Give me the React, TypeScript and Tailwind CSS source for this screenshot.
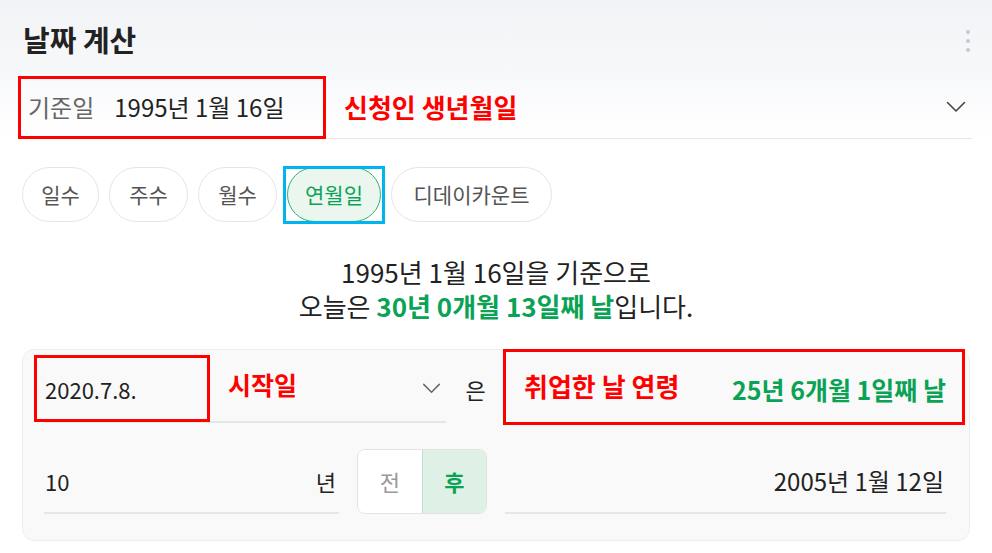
import React from "react";

const font = { fontFamily: '"Noto Sans CJK KR", "Noto Sans", sans-serif' };

function Chevron({ className }: { className?: string }) {
  return (
    <svg className={className} viewBox="0 0 20 12" fill="none" stroke="currentColor" strokeWidth="1.6" strokeLinecap="round" strokeLinejoin="round">
      <path d="M1.5 1.5 L10 10 L18.5 1.5" />
    </svg>
  );
}

export default function App() {
  const pills = [
    { label: "일수", w: "w-[77px]" },
    { label: "주수", w: "w-[79px]" },
    { label: "월수", w: "w-[79px]" },
    { label: "연월일", w: "w-[94px]", active: true },
    { label: "디데이카운트", w: "w-[161px]" },
  ];
  return (
    <div className="w-[992px] h-[553px] bg-white overflow-hidden text-[#222]" style={font}>
      <div className="bg-gradient-to-b from-[#f1f3f6] via-[#f7f8fa] to-white pt-[22px] px-[20px]">
        <div className="flex items-center justify-between h-[34px]">
          <div className="text-[29px] font-bold leading-[34px] pl-[3px] text-[#222]">날짜 계산</div>
          <div className="flex flex-col gap-[5px] mr-[2px] mt-[4px]">
            <span className="block w-[4px] h-[4px] rounded-full bg-[#c3c9d6]" />
            <span className="block w-[4px] h-[4px] rounded-full bg-[#c3c9d6]" />
            <span className="block w-[4px] h-[4px] rounded-full bg-[#c3c9d6]" />
          </div>
        </div>
        <div className="mt-[20px] h-[63px] flex items-center border-b border-[#e6e6e6]">
          <div className="ml-[-2px] w-[308px] h-[63px] border-[3px] border-[#ff0000] flex items-center">
            <span className="pl-[7px] text-[24px] text-[#666] leading-none">기준일</span>
            <span className="ml-[20px] text-[24px] text-[#222] leading-none">1995년 1월 16일</span>
          </div>
          <span className="ml-[18px] text-[26px] font-bold text-[#ff0000] leading-none">신청인 생년월일</span>
          <Chevron className="ml-auto mr-[6px] w-[20px] h-[12px] text-[#444]" />
        </div>
      </div>

      <div className="px-[22px] mt-[28px] flex gap-[10px]">
        {pills.map((p) => (
          <div key={p.label} className="relative">
            <div
              className={
                p.active
                  ? `${p.w} h-[55px] rounded-full border border-[#2fb36b] bg-[#eaf6ee] text-[#0aa356] flex items-center justify-center text-[21px]`
                  : `${p.w} h-[55px] rounded-full border border-[#e5e5e5] bg-white text-[#555] flex items-center justify-center text-[21px]`
              }
            >
              {p.label}
            </div>
            {p.active && (
              <div className="absolute left-[-4px] right-[-4px] top-[-1px] bottom-[-2px] border-[3px] border-[#00b4f0]" />
            )}
          </div>
        ))}
      </div>

      <div className="mt-[33px] text-center text-[26px] leading-[34px] text-[#222]">
        <div>1995년 1월 16일을 기준으로</div>
        <div>
          오늘은 <span className="font-bold text-[#0aa356]">30년 0개월 13일째 날</span>입니다.
        </div>
      </div>

      <div className="mx-[22px] mt-[26px] h-[192px] rounded-[12px] border border-[#efefef] bg-[#f9f9f9] pl-[21px] pr-[23px] pt-[6px]">
        <div className="flex h-[67px]">
          <div className="w-[402px] h-[67px] flex items-center border-b-2 border-[#e6e6e6]">
            <div className="ml-[-10px] w-[176px] h-[67px] border-[3px] border-[#ff0000] flex items-center">
              <span className="pl-[8px] text-[22px] leading-none text-[#222]">2020.7.8.</span>
            </div>
            <span className="ml-[18px] mb-[8px] text-[25px] font-bold leading-none text-[#ff0000]">시작일</span>
            <Chevron className="ml-auto mr-[5px] w-[19px] h-[11px] text-[#666]" />
          </div>
          <div className="w-[59px] flex items-center justify-center text-[22px] text-[#222]">은</div>
          <div className="relative flex-1 flex items-center justify-between">
            <span className="ml-[19px] mb-[8px] text-[26px] font-bold leading-none text-[#ff0000]">취업한 날 연령</span>
            <span className="text-[25px] font-bold leading-none text-[#0aa356]">25년 6개월 1일째 날</span>
            <div className="absolute left-[-2px] right-[-19px] top-[-7px] bottom-[-2px] border-[3px] border-[#ff0000]" />
          </div>
        </div>

        <div className="flex mt-[26px] h-[65px]">
          <div className="w-[295px] h-[65px] flex items-center justify-between border-b-2 border-[#e6e6e6]">
            <span className="pl-[1px] text-[22px] leading-none text-[#222]">10</span>
            <span className="pr-[3px] text-[22px] leading-none text-[#222]">년</span>
          </div>
          <div className="ml-[18px] w-[130px] h-[65px] flex rounded-[8px] border border-[#e3e3e3] overflow-hidden">
            <div className="flex-1 bg-white flex items-center justify-center text-[22px] text-[#999]">전</div>
            <div className="flex-1 bg-[#dff1e6] border-l border-[#b9e2c9] flex items-center justify-center text-[22px] font-bold text-[#0aa356]">후</div>
          </div>
          <div className="ml-[18px] flex-1 h-[65px] flex items-center justify-end border-b-2 border-[#e6e6e6]">
            <span className="text-[24px] leading-none text-[#222] pr-[2px]">2005년 1월 12일</span>
          </div>
        </div>
      </div>
    </div>
  );
}
